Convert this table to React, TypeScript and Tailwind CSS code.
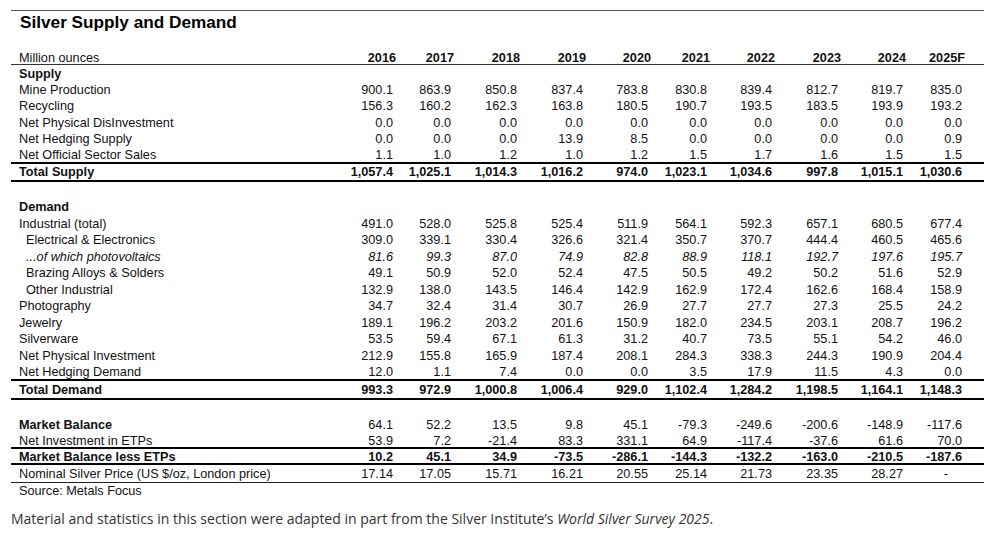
import React from 'react';

type Row = {
  label: string;
  values?: string[];
  kind?: 'section' | 'total' | 'sub' | 'italic' | 'blank' | 'boldlabel';
  h: string;
  border?: string;
};

const years = ['2016', '2017', '2018', '2019', '2020', '2021', '2022', '2023', '2024', '2025F'];

const rows: Row[] = [
  { label: 'Supply', kind: 'section', h: 'h-[16.35px]' },
  { label: 'Mine Production', h: 'h-[16.35px]', values: ['900.1', '863.9', '850.8', '837.4', '783.8', '830.8', '839.4', '812.7', '819.7', '835.0'] },
  { label: 'Recycling', h: 'h-[16.35px]', values: ['156.3', '160.2', '162.3', '163.8', '180.5', '190.7', '193.5', '183.5', '193.9', '193.2'] },
  { label: 'Net Physical DisInvestment', h: 'h-[16.35px]', values: ['0.0', '0.0', '0.0', '0.0', '0.0', '0.0', '0.0', '0.0', '0.0', '0.0'] },
  { label: 'Net Hedging Supply', h: 'h-[16.35px]', values: ['0.0', '0.0', '0.0', '13.9', '8.5', '0.0', '0.0', '0.0', '0.0', '0.9'] },
  { label: 'Net Official Sector Sales', h: 'h-[16.75px]', border: 'border-b-2 border-black', values: ['1.1', '1.0', '1.2', '1.0', '1.2', '1.5', '1.7', '1.6', '1.5', '1.5'] },
  { label: 'Total Supply', kind: 'total', h: 'h-[18.5px]', border: 'border-b-2 border-black', values: ['1,057.4', '1,025.1', '1,014.3', '1,016.2', '974.0', '1,023.1', '1,034.6', '997.8', '1,015.1', '1,030.6'] },
  { label: '', kind: 'blank', h: 'h-[16.7px]' },
  { label: 'Demand', kind: 'section', h: 'h-[16.5px]' },
  { label: 'Industrial (total)', h: 'h-[16.5px]', values: ['491.0', '528.0', '525.8', '525.4', '511.9', '564.1', '592.3', '657.1', '680.5', '677.4'] },
  { label: 'Electrical & Electronics', kind: 'sub', h: 'h-[16.5px]', values: ['309.0', '339.1', '330.4', '326.6', '321.4', '350.7', '370.7', '444.4', '460.5', '465.6'] },
  { label: '...of which photovoltaics', kind: 'italic', h: 'h-[16.5px]', values: ['81.6', '99.3', '87.0', '74.9', '82.8', '88.9', '118.1', '192.7', '197.6', '195.7'] },
  { label: 'Brazing Alloys & Solders', kind: 'sub', h: 'h-[16.5px]', values: ['49.1', '50.9', '52.0', '52.4', '47.5', '50.5', '49.2', '50.2', '51.6', '52.9'] },
  { label: 'Other Industrial', kind: 'sub', h: 'h-[16.5px]', values: ['132.9', '138.0', '143.5', '146.4', '142.9', '162.9', '172.4', '162.6', '168.4', '158.9'] },
  { label: 'Photography', h: 'h-[16.5px]', values: ['34.7', '32.4', '31.4', '30.7', '26.9', '27.7', '27.7', '27.3', '25.5', '24.2'] },
  { label: 'Jewelry', h: 'h-[16.5px]', values: ['189.1', '196.2', '203.2', '201.6', '150.9', '182.0', '234.5', '203.1', '208.7', '196.2'] },
  { label: 'Silverware', h: 'h-[16.5px]', values: ['53.5', '59.4', '67.1', '61.3', '31.2', '40.7', '73.5', '55.1', '54.2', '46.0'] },
  { label: 'Net Physical Investment', h: 'h-[16.5px]', values: ['212.9', '155.8', '165.9', '187.4', '208.1', '284.3', '338.3', '244.3', '190.9', '204.4'] },
  { label: 'Net Hedging Demand', h: 'h-[17.3px]', border: 'border-b-2 border-black', values: ['12.0', '1.1', '7.4', '0.0', '0.0', '3.5', '17.9', '11.5', '4.3', '0.0'] },
  { label: 'Total Demand', kind: 'total', h: 'h-[19px]', border: 'border-b-2 border-black', values: ['993.3', '972.9', '1,000.8', '1,006.4', '929.0', '1,102.4', '1,284.2', '1,198.5', '1,164.1', '1,148.3'] },
  { label: '', kind: 'blank', h: 'h-[16px]' },
  { label: 'Market Balance', kind: 'boldlabel', h: 'h-[16px]', values: ['64.1', '52.2', '13.5', '9.8', '45.1', '-79.3', '-249.6', '-200.6', '-148.9', '-117.6'] },
  { label: 'Net Investment in ETPs', h: 'h-[16.5px]', border: 'border-b-2 border-black', values: ['53.9', '7.2', '-21.4', '83.3', '331.1', '64.9', '-117.4', '-37.6', '61.6', '70.0'] },
  { label: 'Market Balance less ETPs', kind: 'total', h: 'h-[16.5px]', border: 'border-b-2 border-black', values: ['10.2', '45.1', '34.9', '-73.5', '-286.1', '-144.3', '-132.2', '-163.0', '-210.5', '-187.6'] },
  { label: 'Nominal Silver Price (US $/oz, London price)', h: 'h-[17.5px]', border: 'border-b border-[#222]', values: ['17.14', '17.05', '15.71', '16.21', '20.55', '25.14', '21.73', '23.35', '28.27', '-'] },
  { label: 'Source: Metals Focus', kind: 'blank', h: 'h-[16.4px]' },
];

const cols = 'grid grid-cols-[325px_60px_58px_66px_66px_65px_59px_65px_66px_65px_59px_1fr] items-start';

const TableRow = ({ row }: { row: Row }) => {
  const bold = row.kind === 'section' || row.kind === 'total' || row.kind === 'boldlabel';
  const italic = row.kind === 'italic';
  const indent = row.kind === 'sub' || italic;
  return (
    <div className={`${cols} ${row.h} pt-[2.25px] ${row.border ?? ''}`}>
      <div className={`${indent ? 'pl-[15px]' : 'pl-[8px]'} ${bold ? 'font-bold' : ''} ${italic ? 'italic' : ''} whitespace-nowrap`}>
        {row.label}
      </div>
      {(row.values ?? []).map((v, i) => (
        <div
          key={i}
          className={`text-right ${v === '-' ? 'pr-[17px]' : 'pr-[3px]'} ${row.kind === 'total' ? 'font-bold' : ''} ${italic ? 'italic' : ''}`}
        >
          {v}
        </div>
      ))}
    </div>
  );
};

export default function App() {
  return (
    <main className="w-[984px] h-[544px] bg-white pt-[10px] overflow-hidden">
      <div className="ml-[11px] border-t border-[#555] font-['Liberation_Sans',Arial,sans-serif] text-[12.7px] leading-[12.7px] text-[#111]">
        <div className="h-[39.2px]">
          <h1 className="pl-[9px] text-[17.2px] leading-[22px] font-bold text-black">Silver Supply and Demand</h1>
        </div>

        {/* header row */}
        <div className={`${cols} h-[15.3px] pt-[2px] border-b border-[#333]`}>
          <div className="pl-[8px]">Million ounces</div>
          {years.map((y) => (
            <div key={y} className="text-right font-bold">
              {y}
            </div>
          ))}
        </div>

        {rows.map((r, i) => (
          <TableRow key={i} row={r} />
        ))}
      </div>

      <p className="ml-[11px] mt-[9px] font-['Open_Sans',sans-serif] text-[14px] leading-[21px] text-[#333]">
        Material and statistics in this section were adapted in part from the Silver Institute&rsquo;s{' '}
        <em>World Silver Survey 2025</em>.
      </p>
    </main>
  );
}
